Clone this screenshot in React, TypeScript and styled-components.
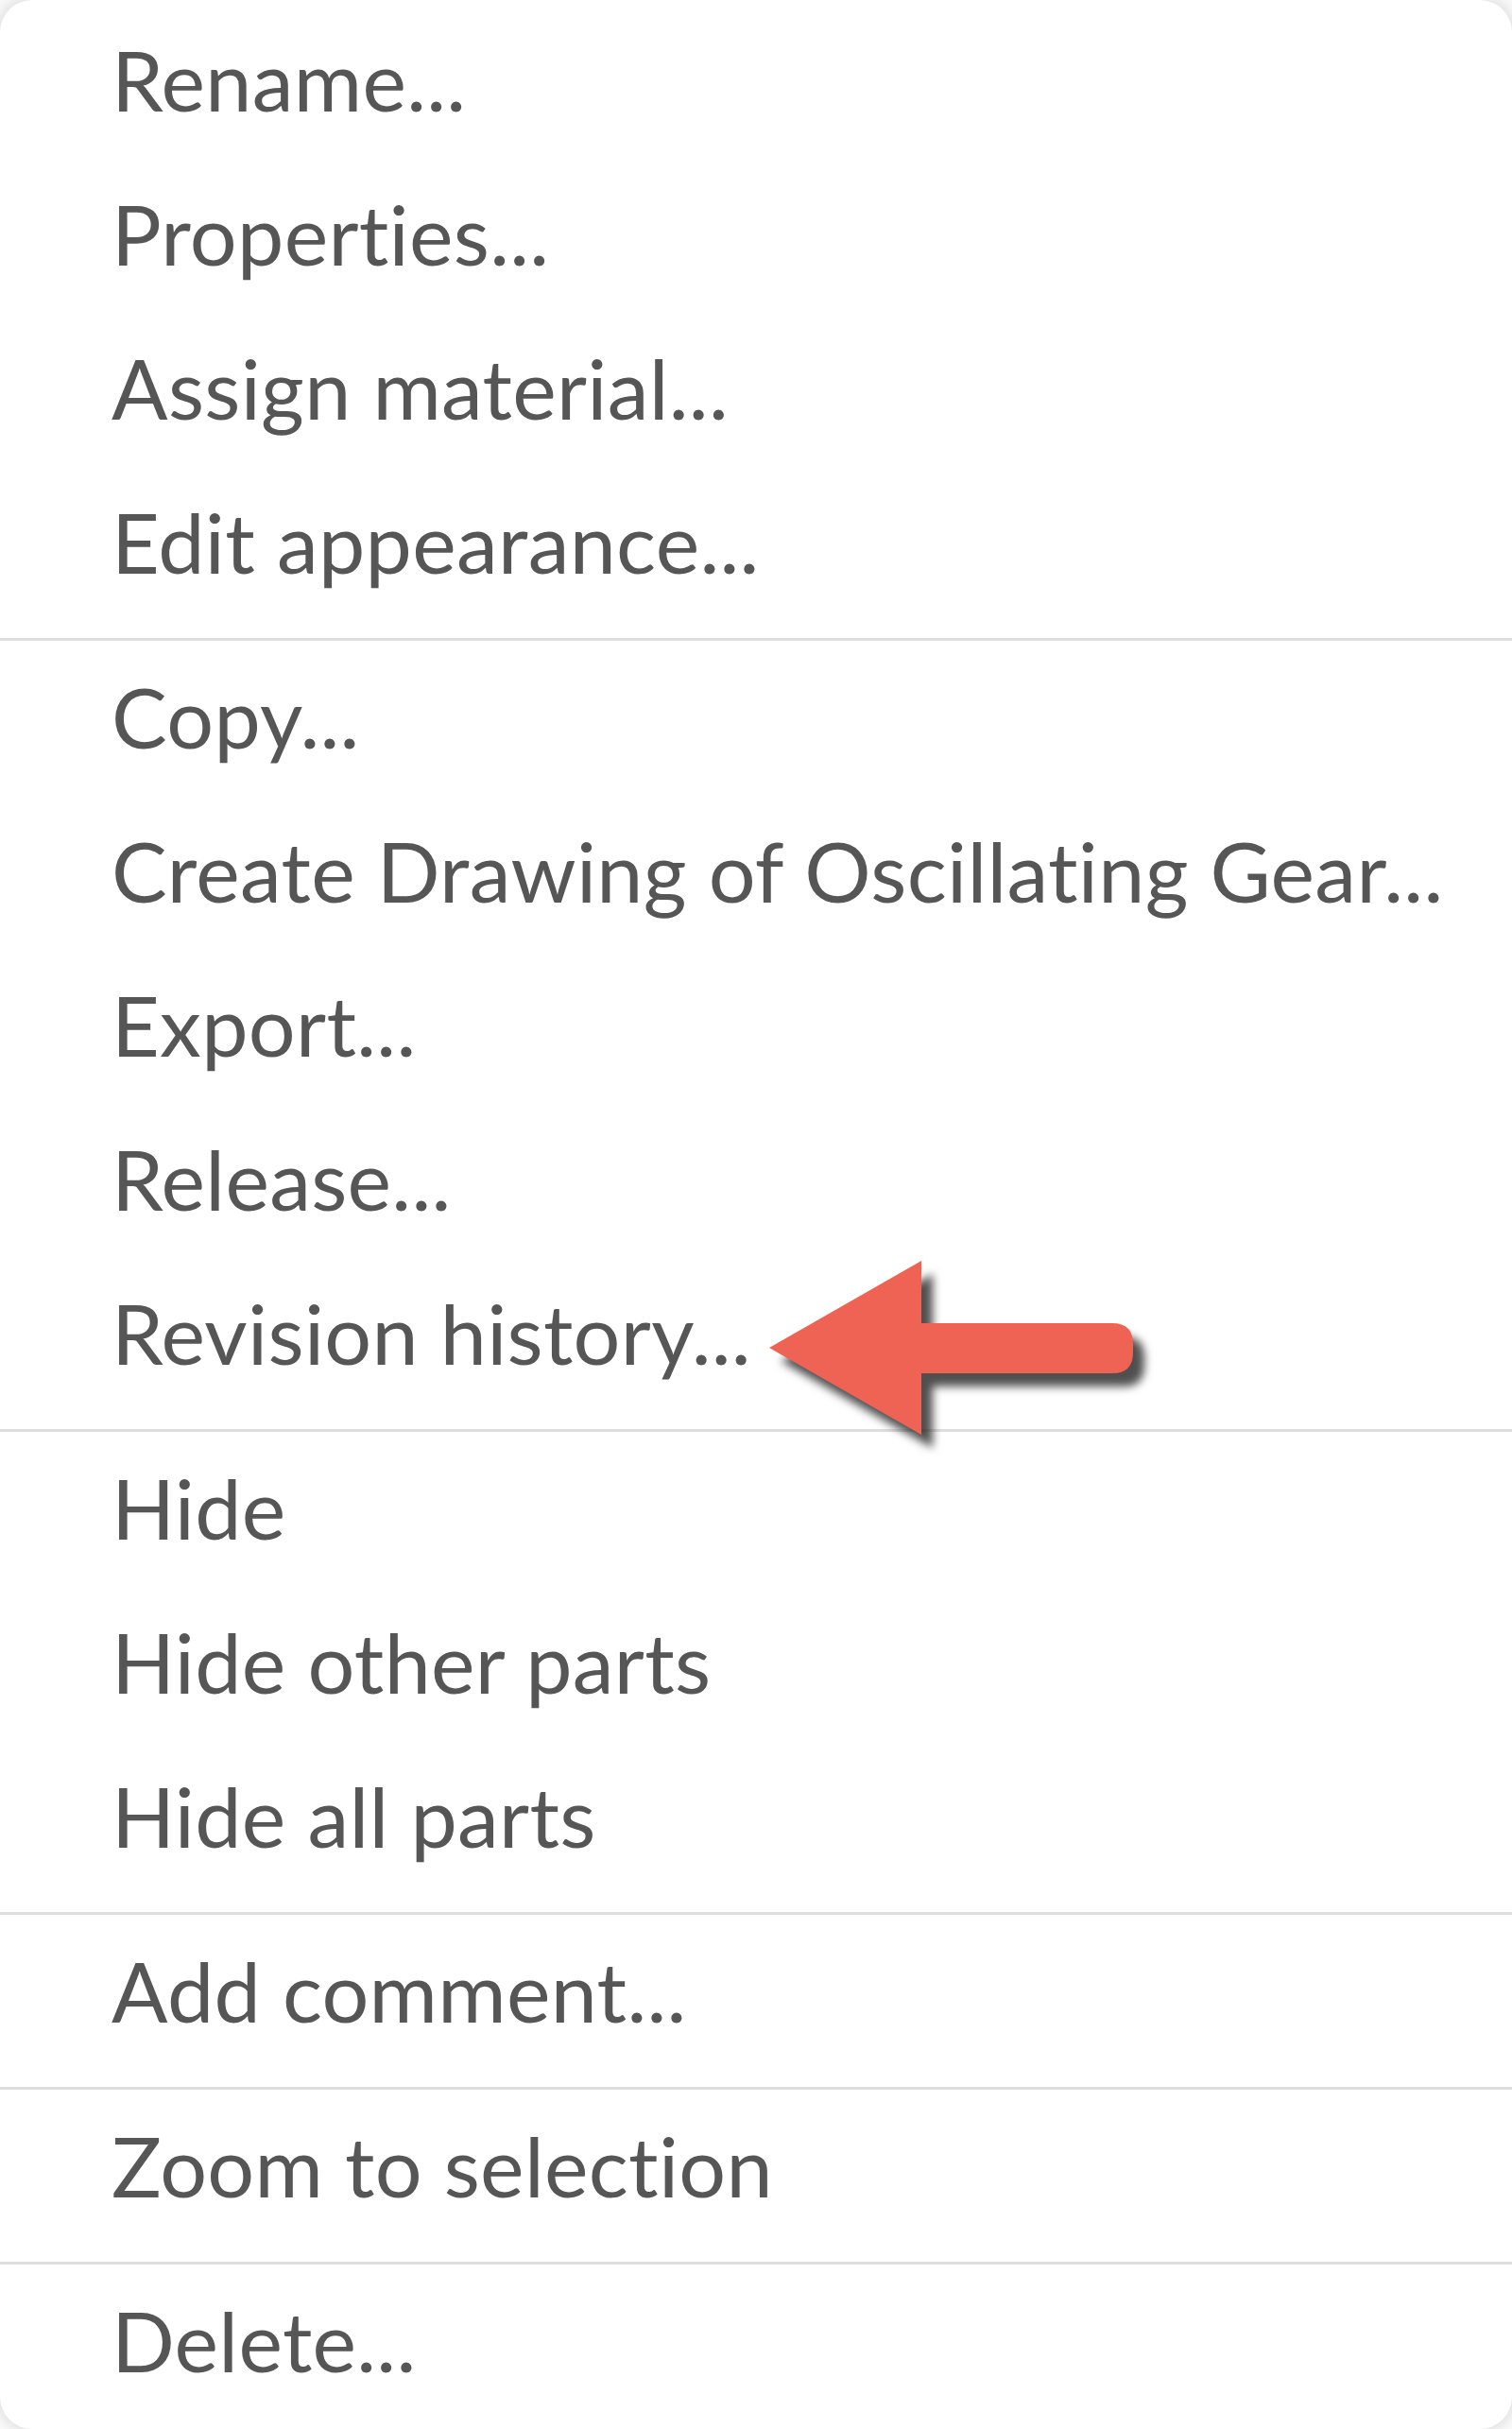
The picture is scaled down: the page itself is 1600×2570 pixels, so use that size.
import styled, { createGlobalStyle } from "styled-components";

const GlobalStyle = createGlobalStyle`
  html, body {
    margin: 0;
    padding: 0;
    background: #ffffff;
    overflow: hidden;
  }
`;

const Menu = styled.div`
  position: relative;
  box-sizing: border-box;
  width: 1600px;
  height: 2570px;
  padding-top: 15px;
  background: #ffffff;
  border-radius: 34px;
  box-shadow: 0 0 26px rgba(0, 0, 0, 0.22);
  font-family: "Lato", "Open Sans", sans-serif;
  overflow: hidden;
`;

const Group = styled.ul`
  list-style: none;
  margin: 0;
  padding: 0;
`;

const Item = styled.li`
  height: 163px;
  box-sizing: border-box;
  padding: 0 0 25px 118px;
  font-size: 88px;
  line-height: 138px;
  letter-spacing: 0.3px;
  font-variant-ligatures: none;
  color: #565656;
  white-space: nowrap;
`;

const Divider = styled.hr`
  margin: 8px 0 11px;
  height: 3px;
  border: 0;
  background: #dedede;
`;

// annotation arrow pointing at "Revision history..."
const Pointer = styled.svg`
  position: absolute;
  left: 800px;
  top: 1320px;
  overflow: visible;
  filter: drop-shadow(12px 14px 5px rgba(35, 35, 35, 0.8));
`;

const groups = [
  ["Rename...", "Properties...", "Assign material...", "Edit appearance..."],
  [
    "Copy...",
    "Create Drawing of Oscillating Gear...",
    "Export...",
    "Release...",
    "Revision history...",
  ],
  ["Hide", "Hide other parts", "Hide all parts"],
  ["Add comment..."],
  ["Zoom to selection"],
  ["Delete..."],
];

export default function App() {
  return (
    <>
      <GlobalStyle />
      <Menu>
        {groups.map((items, i) => (
          <div key={i}>
            {i > 0 && <Divider />}
            <Group>
              {items.map((label) => (
                <Item key={label}>{label}</Item>
              ))}
            </Group>
          </div>
        ))}
        <Pointer width="420" height="220" viewBox="0 0 420 220">
          <path
            d="M14 106 L175 14 L175 80 L377 80 Q399 80 399 102 L399 111 Q399 133 377 133 L175 133 L175 198 Z"
            fill="#ef6354"
          />
        </Pointer>
      </Menu>
    </>
  );
}
